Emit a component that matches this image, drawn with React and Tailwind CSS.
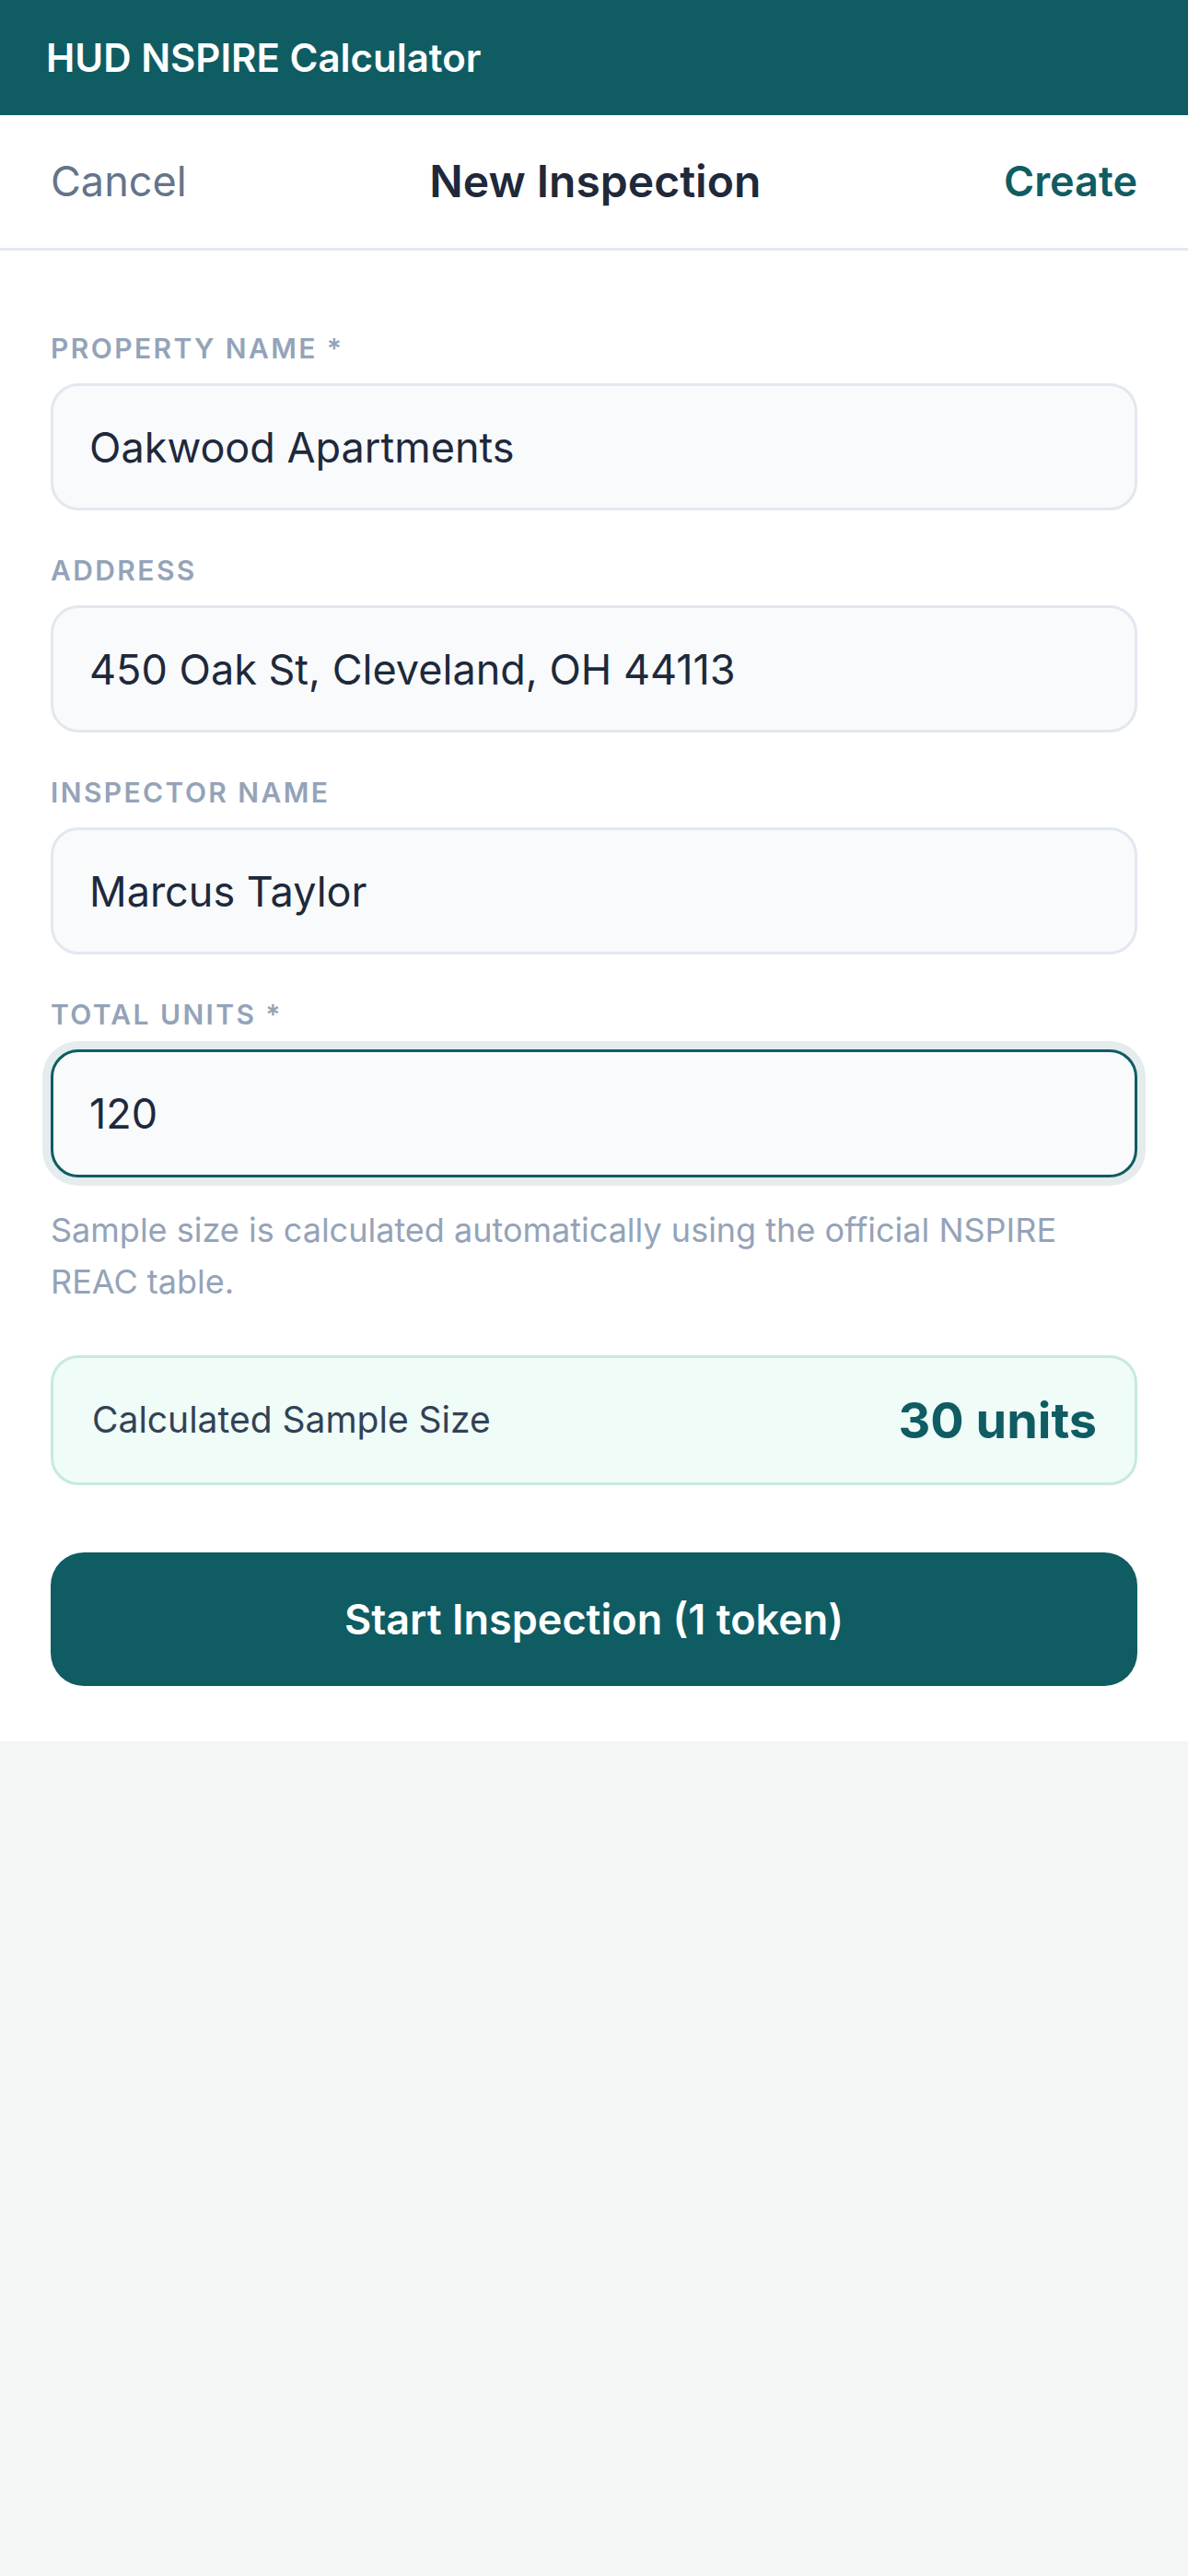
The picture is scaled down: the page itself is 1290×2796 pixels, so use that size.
import { useState } from 'react';

const FONT = { fontFamily: 'Inter, "Noto Sans", sans-serif' };

// Tabela REAC simplificada para o tamanho de amostra
const sampleSizeFor = (units) => {
  const n = parseInt(units, 10);
  if (!n || n <= 0) return 0;
  if (n <= 5) return n;
  if (n <= 50) return Math.min(n, 17);
  if (n <= 100) return 25;
  if (n <= 200) return 30;
  return 35;
};

const Field = ({ label, value, onChange, focused, inputMode }) => (
  <div className="flex flex-col">
    <label className="text-[30px] leading-[36px] font-semibold tracking-[0.08em] uppercase text-[#94a3b8]">
      {label}
    </label>
    <input
      value={value}
      onChange={(e) => onChange(e.target.value)}
      inputMode={inputMode}
      className={
        focused
          ? 'mt-[20px] h-[139px] w-full rounded-[30px] border-[3px] border-[#0f5c63] bg-[#f8fafc] px-[39px] text-[45px] text-[#1e293b] outline-none ring-[9px] ring-[#e4eced]'
          : 'mt-[20px] h-[138px] w-full rounded-[30px] border-[3px] border-[#e2e8f0] bg-[#f8fafc] px-[39px] text-[45px] text-[#1e293b] outline-none'
      }
      style={FONT}
    />
  </div>
);

export default function App() {
  const [propertyName, setPropertyName] = useState('Oakwood Apartments');
  const [address, setAddress] = useState('450 Oak St, Cleveland, OH 44113');
  const [inspector, setInspector] = useState('Marcus Taylor');
  const [units, setUnits] = useState('120');

  const sample = sampleSizeFor(units);

  return (
    <div className="min-h-screen bg-[#f4f6f6]" style={FONT}>
      {/* Barra superior */}
      <header className="flex h-[125px] items-center bg-[#0f5c63] px-[50px]">
        <h1 className="text-[42px] font-semibold text-white">HUD NSPIRE Calculator</h1>
      </header>

      {/* Navegação */}
      <nav className="flex h-[147px] items-center justify-between border-b-[3px] border-[#e2e8f0] bg-white px-[55px]">
        <button className="text-[45px] text-[#64748b]">Cancel</button>
        <span className="text-[48px] font-semibold text-[#1e293b]">New Inspection</span>
        <button className="text-[45px] font-semibold text-[#0f5c63]">Create</button>
      </nav>

      {/* Formulário */}
      <main className="flex flex-col bg-white px-[55px] pt-[88px] pb-[60px]">
        <div className="flex flex-col gap-[47px]">
          <Field label="Property Name *" value={propertyName} onChange={setPropertyName} />
          <Field label="Address" value={address} onChange={setAddress} />
          <Field label="Inspector Name" value={inspector} onChange={setInspector} />
          <Field label="Total Units *" value={units} onChange={setUnits} focused inputMode="numeric" />
        </div>

        <p className="mt-[29px] text-[36px] leading-[56px] text-[#94a3b8]">
          Sample size is calculated automatically using the official NSPIRE REAC table.
        </p>

        <div className="mt-[52px] flex h-[141px] items-center justify-between rounded-[30px] border-[3px] border-[#c7eadb] bg-[#effcf8] pl-[42px] pr-[41px]">
          <span className="text-[39px] text-[#334155]">Calculated Sample Size</span>
          <span className="text-[54px] font-bold text-[#0f5c63]">{sample} units</span>
        </div>

        <button className="mt-[73px] flex h-[145px] w-full items-center justify-center rounded-[36px] bg-[#0f5c63] text-[45px] font-semibold text-white">
          Start Inspection (1 token)
        </button>
      </main>
    </div>
  );
}
